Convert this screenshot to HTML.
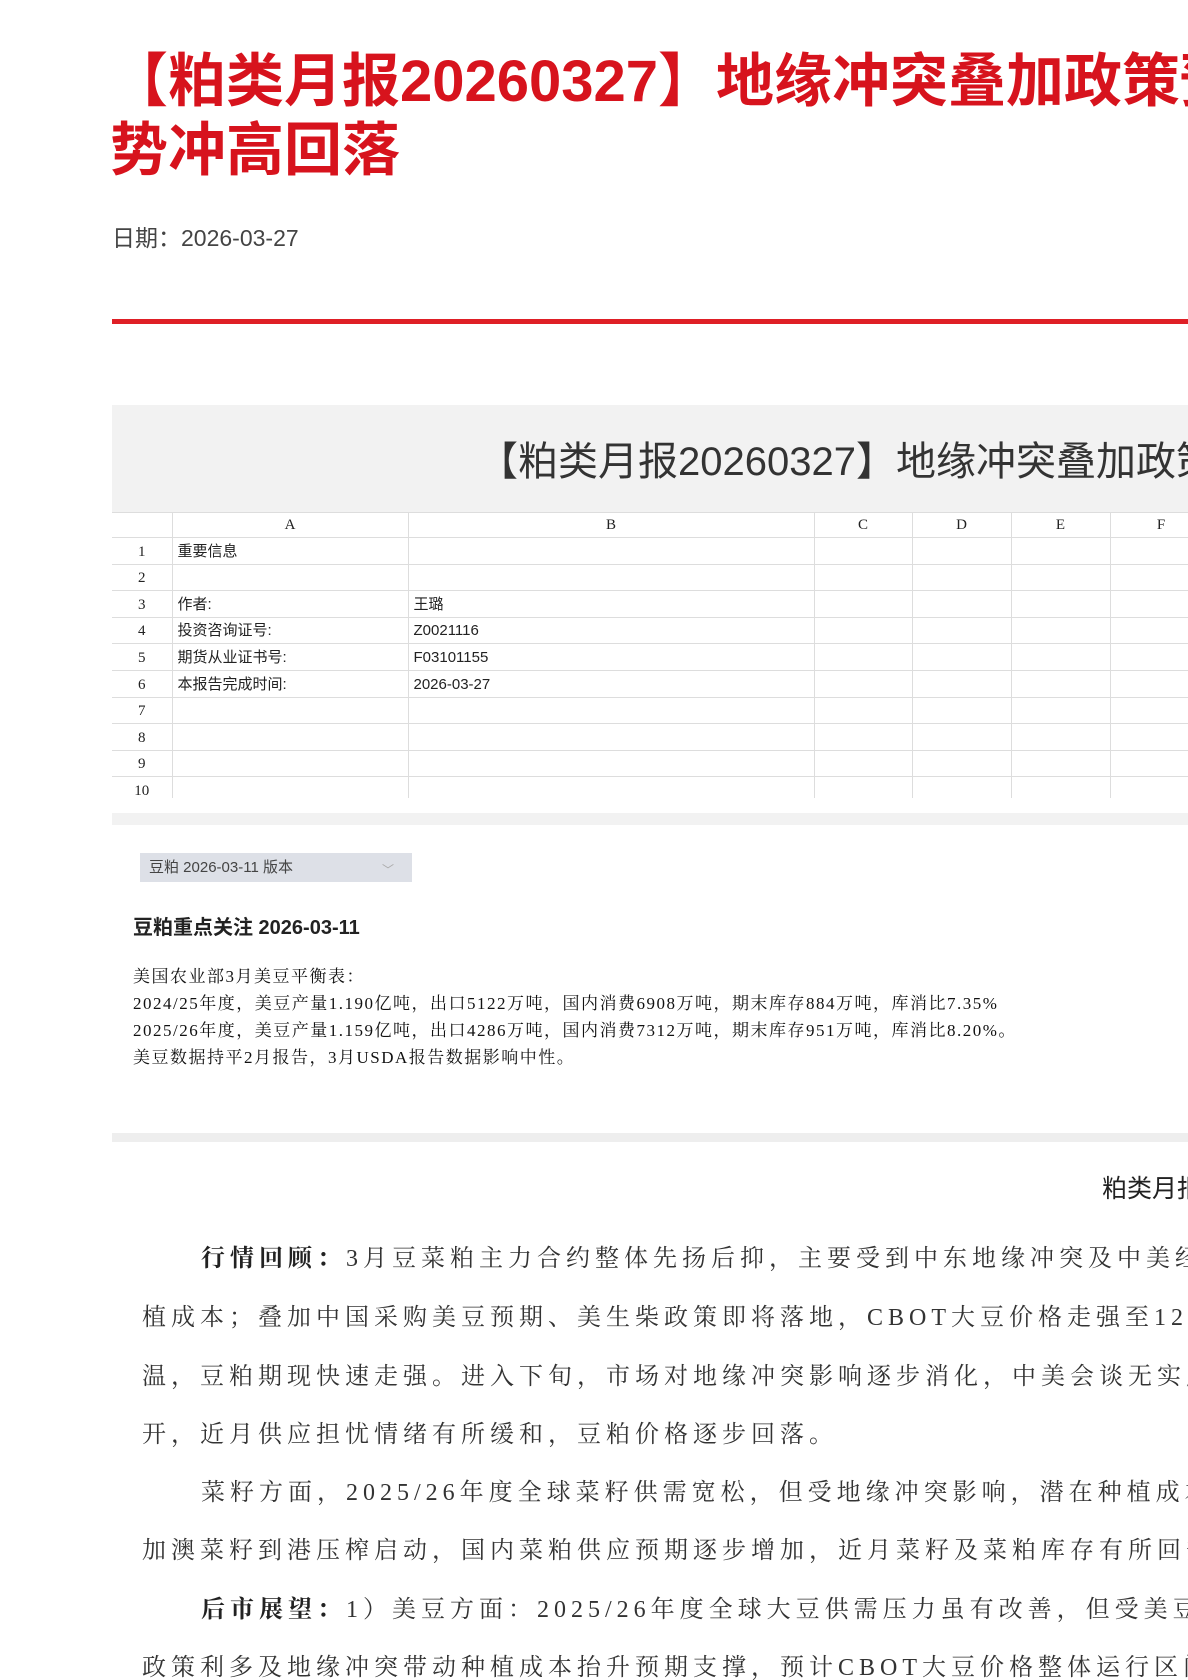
<!DOCTYPE html>
<html><head><meta charset="utf-8"><style>
*{margin:0;padding:0;box-sizing:border-box}
html,body{width:1188px;height:1680px;overflow:hidden;background:#fff}
body{position:relative;font-family:"Liberation Sans","Noto Sans CJK SC",sans-serif;color:#333}
#w{position:absolute;left:0;top:0;width:1188px;height:1680px;overflow:hidden}
.abs{position:absolute;white-space:nowrap}
.t1{left:110px;font-size:58px;font-weight:bold;color:#d7131d;line-height:70px}
.date{left:112px;top:222px;font-size:23px;color:#444;line-height:32px}
.red{left:112px;top:319px;width:1076px;height:5px;background:#df1f26}
.box{left:112px;top:405px;width:1076px;height:420px;background:#f2f2f2}
.htitle{left:478px;top:436px;font-size:40px;color:#333;line-height:52px}
table{position:absolute;left:112px;top:512px;border-collapse:collapse;background:#fff;table-layout:fixed;width:1100px}
td{border:1px solid #ddd;height:26.6px;font-size:15px;padding:0 0 0 5px;color:#222;line-height:24px;vertical-align:bottom;overflow:hidden}
td.n{text-align:center;padding:0;font-family:"Liberation Serif",serif;border-left:none;color:#222}
tr.h td{text-align:center;font-family:"Liberation Serif",serif;padding:0;height:25px;vertical-align:middle}
.under{left:112px;top:798px;width:1076px;height:15px;background:#fff}
.dd{left:140px;top:853px;width:272px;height:29px;background:#dde0e7;font-size:15px;color:#444;line-height:29px;padding-left:9px}
.dd span{position:absolute;right:18px;top:3px;color:#aaa;font-size:12px}
.h2{left:133px;top:914px;font-size:20px;font-weight:bold;color:#222;line-height:28px}
.sm{left:133px;font-size:17px;letter-spacing:1.5px;font-family:"Liberation Serif","Noto Serif CJK SC",serif;color:#111;line-height:27px}
.sep{left:112px;top:1133px;width:1076px;height:9px;background:#eee}
.pt{left:1102px;top:1172px;font-size:25px;color:#222;line-height:34px}
.b{font-family:"Liberation Serif","Noto Serif CJK SC",serif;font-size:24px;letter-spacing:5px;color:#333;line-height:30px}
.b b{font-weight:bold;color:#222}
</style></head><body><div id="w">
<div class="abs t1" style="top:47px">【粕类月报20260327】地缘冲突叠加政策预</div>
<div class="abs t1" style="top:116px">势冲高回落</div>
<div class="abs date">日期：2026-03-27</div>
<div class="abs red"></div>
<div class="abs box"></div>
<div class="abs htitle">【粕类月报20260327】地缘冲突叠加政策预期</div>
<table>
<colgroup><col style="width:60px"><col style="width:236px"><col style="width:406px"><col style="width:98px"><col style="width:99px"><col style="width:99px"><col style="width:102px"></colgroup>
<tr class="h"><td class="n"></td><td>A</td><td>B</td><td>C</td><td>D</td><td>E</td><td>F</td></tr>
<tr><td class="n">1</td><td>重要信息</td><td></td><td></td><td></td><td></td><td></td></tr>
<tr><td class="n">2</td><td></td><td></td><td></td><td></td><td></td><td></td></tr>
<tr><td class="n">3</td><td>作者:</td><td>王璐</td><td></td><td></td><td></td><td></td></tr>
<tr><td class="n">4</td><td>投资咨询证号:</td><td>Z0021116</td><td></td><td></td><td></td><td></td></tr>
<tr><td class="n">5</td><td>期货从业证书号:</td><td>F03101155</td><td></td><td></td><td></td><td></td></tr>
<tr><td class="n">6</td><td>本报告完成时间:</td><td>2026-03-27</td><td></td><td></td><td></td><td></td></tr>
<tr><td class="n">7</td><td></td><td></td><td></td><td></td><td></td><td></td></tr>
<tr><td class="n">8</td><td></td><td></td><td></td><td></td><td></td><td></td></tr>
<tr><td class="n">9</td><td></td><td></td><td></td><td></td><td></td><td></td></tr>
<tr><td class="n">10</td><td></td><td></td><td></td><td></td><td></td><td></td></tr>
</table>
<div class="abs under"></div>
<div class="abs dd">豆粕 2026-03-11 版本<span>﹀</span></div>
<div class="abs h2">豆粕重点关注 2026-03-11</div>
<div class="abs sm" style="top:963px">美国农业部3月美豆平衡表：</div>
<div class="abs sm" style="top:990px">2024/25年度，美豆产量1.190亿吨，出口5122万吨，国内消费6908万吨，期末库存884万吨，库消比7.35%</div>
<div class="abs sm" style="top:1017px">2025/26年度，美豆产量1.159亿吨，出口4286万吨，国内消费7312万吨，期末库存951万吨，库消比8.20%。</div>
<div class="abs sm" style="top:1044px">美豆数据持平2月报告，3月USDA报告数据影响中性。</div>
<div class="abs sep"></div>
<div class="abs pt">粕类月报</div>
<div class="abs b" style="left:201px;top:1244px"><b>行情回顾：</b>3月豆菜粕主力合约整体先扬后抑，主要受到中东地缘冲突及中美经贸</div>
<div class="abs b" style="left:142px;top:1303px">植成本；叠加中国采购美豆预期、美生柴政策即将落地，CBOT大豆价格走强至1200美分</div>
<div class="abs b" style="left:142px;top:1362px">温，豆粕期现快速走强。进入下旬，市场对地缘冲突影响逐步消化，中美会谈无实质</div>
<div class="abs b" style="left:142px;top:1420px">开，近月供应担忧情绪有所缓和，豆粕价格逐步回落。</div>
<div class="abs b" style="left:201px;top:1478px">菜籽方面，2025/26年度全球菜籽供需宽松，但受地缘冲突影响，潜在种植成本抬升</div>
<div class="abs b" style="left:142px;top:1536px">加澳菜籽到港压榨启动，国内菜粕供应预期逐步增加，近月菜籽及菜粕库存有所回升</div>
<div class="abs b" style="left:201px;top:1595px"><b>后市展望：</b>1）美豆方面：2025/26年度全球大豆供需压力虽有改善，但受美豆</div>
<div class="abs b" style="left:142px;top:1653px">政策利多及地缘冲突带动种植成本抬升预期支撑，预计CBOT大豆价格整体运行区间</div>
</div></body></html>
